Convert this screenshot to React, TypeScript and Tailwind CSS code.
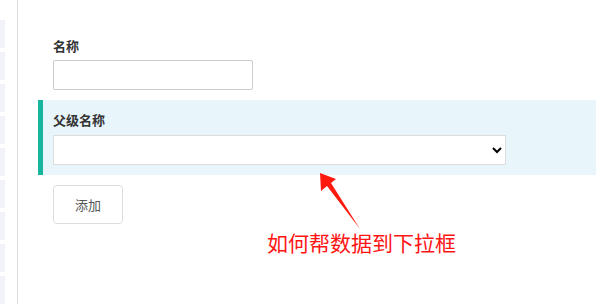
import React from "react";

export default function App() {
  const blocks = Array.from({ length: 9 });
  return (
    <div
      className="relative flex h-[304px] w-[596px] overflow-hidden bg-white"
      style={{ fontFamily: '"Noto Sans CJK SC", "Noto Sans", sans-serif' }}
    >
      <aside className="flex w-[18px] shrink-0 flex-col gap-[4px] border-r border-[#dcdcdc] pt-[20px]">
        {blocks.map((_, i) => (
          <div key={i} className="h-[28px] w-[5px] bg-[#f1f3f9]" />
        ))}
      </aside>
      <main className="flex flex-1 flex-col pl-[20px]">
        <div className="pl-[15px] pt-[37px]">
          <label className="mb-[5px] block text-[13px] font-bold leading-[18px] text-[#333]">名称</label>
          <input className="block h-[30px] w-[200px] rounded-[2px] border border-[#cccccc] bg-white" />
        </div>
        <div className="mt-[10px] border-l-[5px] border-[#17b59e] bg-[#e8f5fb] pb-[10px] pl-[10px] pt-[11px]">
          <label className="mb-[6px] block text-[13px] font-bold leading-[18px] text-[#333]">父级名称</label>
          <select className="block h-[30px] w-[453px] border border-[#dddddd] bg-white px-2 text-[13px]">
            <option></option>
          </select>
        </div>
        <div className="ml-[15px] mt-[10px]">
          <button className="h-[39px] w-[70px] rounded-[4px] border border-[#dddddd] bg-white text-[13px] text-[#555]">
            添加
          </button>
        </div>
      </main>
      <svg className="pointer-events-none absolute left-0 top-0" width="596" height="304">
        <polygon
          points="320,173 336,179 331,183 360,229 327,186 321,191"
          fill="#ff1a0d"
        />
      </svg>
      <div className="absolute left-[267px] top-[228px] text-[21px] leading-[28px] text-[#ff1414]">
        如何帮数据到下拉框
      </div>
    </div>
  );
}
